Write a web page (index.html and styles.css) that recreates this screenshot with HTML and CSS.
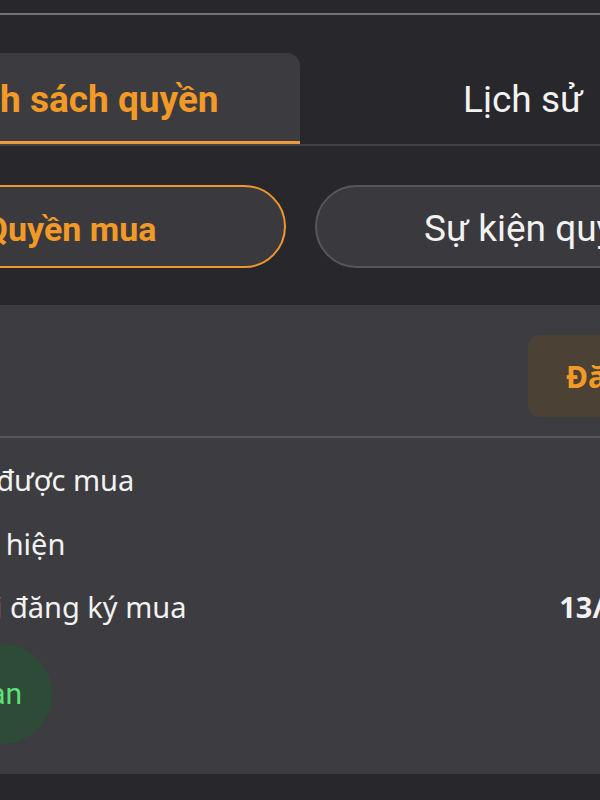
FILE: index.html
```html
<!DOCTYPE html>
<html lang="vi">
<head>
<meta charset="utf-8">
<title>Quyền mua</title>
<link rel="stylesheet" href="styles.css">
</head>
<body>
<div class="screen">
  <div class="statusbar"></div>
  <div class="tabs">
    <div class="tab active">Danh sách quyền</div>
    <div class="tab">Lịch sử</div>
  </div>
  <div class="pills">
    <div class="pill active">Quyền mua</div>
    <div class="pill">Sự kiện quyền</div>
  </div>
  <div class="card">
    <div class="card-head">
      <div class="btn">Đăng ký</div>
    </div>
    <div class="rows">
      <div class="row"><span class="label">Số lượng được mua</span><span class="val">100</span></div>
      <div class="row"><span class="label">Tỷ lệ thực hiện</span><span class="val">10:1</span></div>
      <div class="row"><span class="label">Ngày cuối đăng ký mua</span><span class="val">13/06/2024</span></div>
      <div class="badge">Còn hạn</div>
    </div>
  </div>
</div>
</body>
</html>
```

FILE: styles.css
```css
html, body {
  margin: 0;
  padding: 0;
}
body {
  background: #28272c;
  width: 600px;
  height: 800px;
  overflow: hidden;
  font-family: Roboto, "Noto Sans", sans-serif;
}
.screen {
  width: 892px;
  margin-left: -146px;
}
.statusbar {
  height: 13px;
  border-bottom: 2px solid #727177;
}
.tabs {
  display: flex;
  margin-top: 38px;
  border-bottom: 2px solid #414146;
}
.tab {
  flex: 1;
  box-sizing: border-box;
  height: 91px;
  padding-top: 4px;
  border-bottom: 3px solid transparent;
  display: flex;
  align-items: center;
  justify-content: center;
  font-size: 37px;
  color: #f2f2f2;
}
.tab.active {
  background: #3c3c40;
  border-radius: 13px 13px 0 0;
  border-bottom-color: #ee9a3c;
  color: #f39a26;
  font-weight: 700;
}
.pills {
  display: flex;
  gap: 29px;
  margin: 39px 0 0 -16px;
}
.pill {
  flex: none;
  width: 448px;
  box-sizing: border-box;
  height: 83px;
  padding-top: 4px;
  border-radius: 42px;
  border: 2px solid #56565c;
  background: #3a3a3e;
  display: flex;
  align-items: center;
  justify-content: center;
  font-size: 37px;
  color: #f2f2f2;
}
.pill.active {
  padding-left: 17px;
  border-color: #ee972e;
  color: #f39a26;
  font-weight: 700;
  font-size: 34px;
}
.card {
  margin-top: 37px;
  background: #3d3d41;
  padding-bottom: 30px;
}
.card-head {
  display: flex;
  justify-content: flex-end;
  padding: 30px 20px 19px;
  border-bottom: 2px solid #56565b;
}
.btn {
  height: 82px;
  padding: 0 38px;
  border-radius: 12px;
  background: #4c4135;
  color: #f39a26;
  font-family: "Noto Sans", sans-serif;
  font-weight: 700;
  font-size: 30px;
  display: flex;
  align-items: center;
}
.rows {
  padding: 10px 30px 0 13px;
  font-family: "Noto Sans", sans-serif;
  font-size: 29px;
  color: #f2f2f2;
}
.row {
  display: flex;
  justify-content: space-between;
  height: 63.5px;
  line-height: 63.5px;
}
.val {
  font-weight: 700;
}
.badge {
  display: inline-flex;
  align-items: center;
  margin-top: 5px;
  margin-left: 15px;
  height: 100px;
  padding: 0 30px;
  border-radius: 50px;
  background: #2d4b36;
  color: #5fe07b;
  font-family: Roboto, sans-serif;
  font-size: 30px;
}
```
